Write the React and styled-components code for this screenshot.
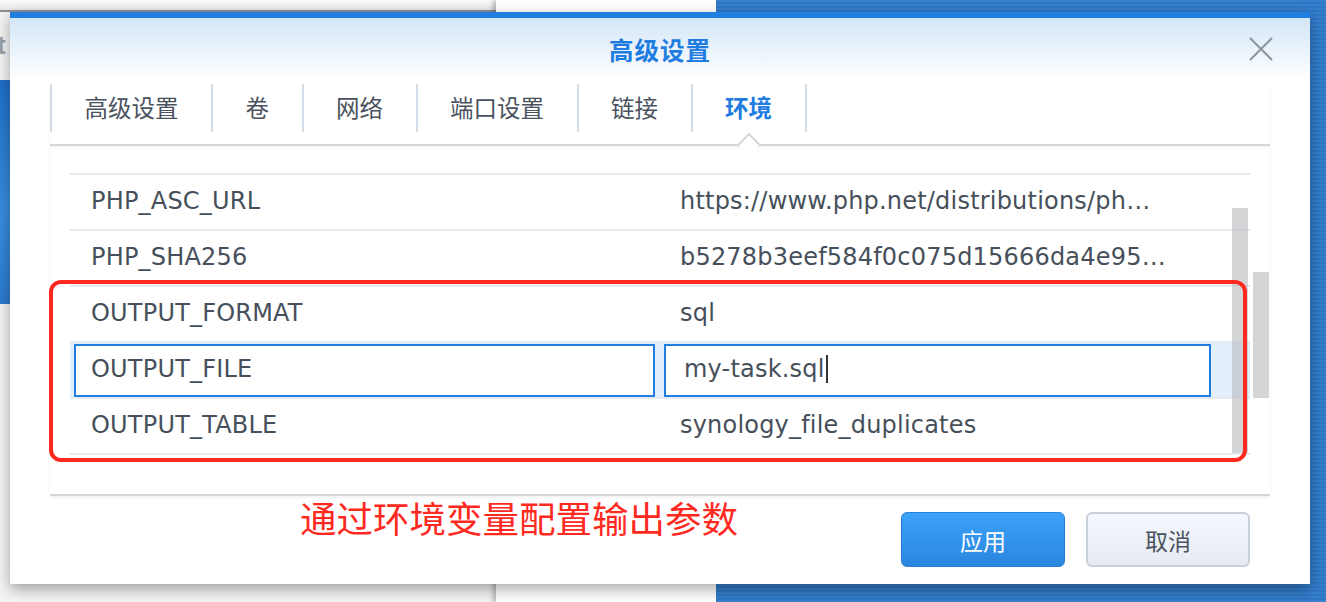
import React from "react";
import styled, { createGlobalStyle } from "styled-components";

const Global = createGlobalStyle`
  html, body { margin: 0; padding: 0; }
  body {
    width: 1326px; height: 602px; overflow: hidden;
    font-family: "DejaVu Sans", "Noto Sans CJK SC", sans-serif;
  }
  * { box-sizing: border-box; }
`;

const Desktop = styled.div`
  position: relative;
  width: 1326px;
  height: 602px;
  overflow: hidden;
  background:
    repeating-linear-gradient(0deg, rgba(255,255,255,0.03) 0 2px, rgba(0,0,0,0.03) 2px 4px),
    #2f7bcb;
`;

const BackWindow = styled.div`
  position: absolute;
  top: 0;
  left: ${(p) => p.$left}px;
  width: ${(p) => p.$width}px;
  height: 602px;
  background: ${(p) => p.$bg};
  box-shadow: ${(p) => (p.$shadow ? "-3px 0 5px rgba(0,0,0,0.25)" : "none")};
`;

const BackTitle = styled.div`
  height: 12px;
  background: linear-gradient(#fbfbfb 0, #e9e9e9 10px, #8c8f94 10px, #8c8f94 12px);
`;

const BackGlyph = styled.div`
  margin: 20px 0 0 -3px;
  font: bold 26px "Liberation Sans", sans-serif;
  color: #9aa0a6;
  line-height: 26px;
  height: 34px;
`;

const BackStrip = styled.div`
  margin-top: 14px;
  width: 10px;
  height: 224px;
  background: linear-gradient(160deg, #1f6fc8, #3b8ee0 60%, #2a7ad0);
`;

const Dialog = styled.div`
  position: absolute;
  left: 10px;
  top: 12px;
  width: 1300px;
  height: 572px;
  background: #fff;
  border-top: 6px solid #1f7ee0;
  box-shadow: 0 5px 14px rgba(0, 0, 0, 0.35);
  display: flex;
  flex-direction: column;
`;

const Header = styled.div`
  height: 62px;
  flex: none;
  background: linear-gradient(#d3e6f7, #ffffff);
  display: grid;
  grid-template-columns: 1fr auto 1fr;
  align-items: center;
`;

const Title = styled.div`
  grid-column: 2;
  font: bold 24.5px "Noto Sans CJK SC", sans-serif;
  color: #1f7ce0;
  letter-spacing: 1px;
`;

const Close = styled.button`
  grid-column: 3;
  justify-self: end;
  margin-right: 36px;
  width: 26px;
  height: 24px;
  padding: 0;
  border: 0;
  background: none;
  display: flex;
  align-items: center;
  justify-content: center;
`;

const TabBar = styled.div`
  flex: none;
  margin: 4px 40px 0;
  height: 62px;
  border-bottom: 2px solid #d6d6d6;
  box-shadow: 0 2px 3px rgba(0, 0, 0, 0.05);
  display: flex;
  align-items: flex-start;
`;

const Tab = styled.div`
  position: relative;
  height: 48px;
  padding: 0 32.5px;
  border-left: 2px solid #d3dde8;
  &:last-child { border-right: 2px solid #d3dde8; }
  font: ${(p) => (p.$active ? "bold" : "normal")} 23.5px "Noto Sans CJK SC", sans-serif;
  line-height: 46px;
  color: ${(p) => (p.$active ? "#1f7ce0" : "#4a5260")};
`;

const Notch = styled.span`
  position: absolute;
  left: calc(50% - 8px);
  top: 52px;
  width: 16px;
  height: 16px;
  background: #fff;
  border-left: 2px solid #d6d6d6;
  border-top: 2px solid #d6d6d6;
  transform: rotate(45deg);
`;

const Panel = styled.div`
  position: relative;
  flex: none;
  margin: 0 40px;
  height: 350px;
  padding: 27px 0 0 20px;
  border-bottom: 2px solid #d6d6d6;
  box-shadow: 0 2px 3px rgba(0, 0, 0, 0.05);
`;

const List = styled.div`
  width: 1180px;
  border-top: 2px solid #e6ebf1;
`;

const Row = styled.div`
  height: 56px;
  display: grid;
  grid-template-columns: 590px 1fr;
  align-items: center;
  border-bottom: 2px solid #e6ebf1;
  background: ${(p) => (p.$selected ? "#e3f0fb" : "transparent")};
  font-size: 24px;
  letter-spacing: 0.2px;
  color: #464f5a;
`;

const Cell = styled.div`
  padding-left: ${(p) => (p.$value ? 20 : 21)}px;
  padding-bottom: 3px;
  white-space: nowrap;
  overflow: hidden;
`;

const Field = styled.div`
  height: 53px;
  margin: 0 ${(p) => (p.$value ? "39px 0 4px" : "5px 0 4px")};
  border: 2px solid #1f7ee0;
  background: #fff;
  display: flex;
  align-items: center;
  padding-left: ${(p) => (p.$value ? 18 : 15)}px;
  padding-bottom: 3px;
  white-space: nowrap;
`;

const Caret = styled.span`
  display: inline-block;
  width: 2px;
  height: 28px;
  margin-left: 1px;
  background: #333;
`;

const ScrollBar = styled.div`
  position: absolute;
  left: ${(p) => p.$left}px;
  top: ${(p) => p.$top}px;
  width: 16px;
  height: ${(p) => p.$h}px;
  background: rgba(185, 187, 191, 0.62);
`;

const Annotation = styled.div`
  position: absolute;
  left: -1px;
  top: 134px;
  width: 1198px;
  height: 182px;
  border: 4px solid #ff2a1f;
  border-radius: 12px;
  pointer-events: none;
`;

const Footer = styled.div`
  flex: 1;
  display: flex;
  align-items: flex-start;
  padding: 0 60px 0 290px;
`;

const Note = styled.div`
  margin-top: 1px;
  font: 36.5px/42px "Noto Sans CJK SC", sans-serif;
  color: #ff2a1f;
`;

const Buttons = styled.div`
  margin-left: auto;
  margin-top: 16px;
  display: flex;
  gap: 21px;
`;

const Button = styled.button`
  width: 164px;
  height: 55px;
  border-radius: 6px;
  font: 23px "Noto Sans CJK SC", sans-serif;
  cursor: pointer;
  ${(p) =>
    p.$primary
      ? `background: linear-gradient(#3ca2f7, #2a86df);
         border: 1px solid #2a7fd6;
         color: #fff;`
      : `background: linear-gradient(#f5f8fd, #e6ebf2);
         border: 2px solid #c8d0da;
         color: #4a5260;`}
`;

const tabs = ["高级设置", "卷", "网络", "端口设置", "链接", "环境"];

const rows = [
  ["PHP_ASC_URL", "https://www.php.net/distributions/ph…"],
  ["PHP_SHA256", "b5278b3eef584f0c075d15666da4e95…"],
  ["OUTPUT_FORMAT", "sql"],
  ["OUTPUT_FILE", "my-task.sql", true],
  ["OUTPUT_TABLE", "synology_file_duplicates"],
];

export default function App() {
  return (
    <Desktop>
      <Global />
      <BackWindow $left={0} $width={496} $bg="#f4f4f4">
        <BackTitle />
        <BackGlyph>t</BackGlyph>
        <BackStrip />
      </BackWindow>
      <BackWindow $left={496} $width={220} $bg="#ffffff" $shadow />
      <Dialog>
        <Header>
          <Title>高级设置</Title>
          <Close aria-label="close">
            <svg width="26" height="24" viewBox="0 0 26 24">
              <path d="M2 1 L24 23 M24 1 L2 23" stroke="#8e949b" strokeWidth="2" fill="none" />
            </svg>
          </Close>
        </Header>
        <TabBar>
          {tabs.map((t, i) => (
            <Tab key={t} $active={i === tabs.length - 1}>
              {t}
              {i === tabs.length - 1 && <Notch />}
            </Tab>
          ))}
        </TabBar>
        <Panel>
          <List>
            {rows.map(([k, v, sel]) => (
              <Row key={k} $selected={sel}>
                {sel ? (
                  <>
                    <Field>{k}</Field>
                    <Field $value>
                      {v}
                      <Caret />
                    </Field>
                  </>
                ) : (
                  <>
                    <Cell>{k}</Cell>
                    <Cell $value>{v}</Cell>
                  </>
                )}
              </Row>
            ))}
          </List>
          <ScrollBar $left={1182} $top={62} $h={245} />
          <ScrollBar $left={1203} $top={126} $h={126} />
          <Annotation />
        </Panel>
        <Footer>
          <Note>通过环境变量配置输出参数</Note>
          <Buttons>
            <Button $primary>应用</Button>
            <Button>取消</Button>
          </Buttons>
        </Footer>
      </Dialog>
    </Desktop>
  );
}
